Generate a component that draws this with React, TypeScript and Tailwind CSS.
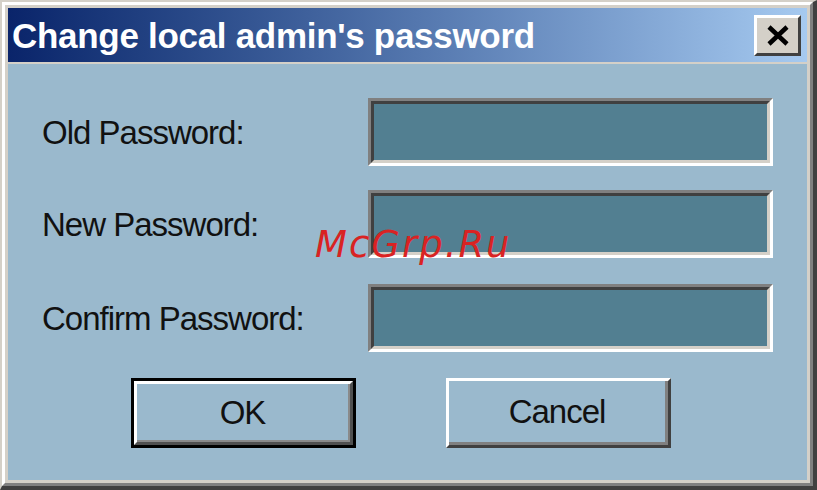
import React from "react";

function Field({ label }: { label: string }) {
  return (
    <div className="flex items-center h-[68px]">
      <div className="w-[326px] text-[33px] tracking-[-1px] text-[#111] leading-none" style={{}}>
        {label}
      </div>
      <div className="w-[405px] h-[68px] border-t-[3px] border-l-[3px] border-t-[#808080] border-l-[#808080] border-b-[3px] border-r-[3px] border-b-white border-r-white">
        <div className="w-full h-full border-t-[3px] border-l-[3px] border-t-[#404040] border-l-[#404040] border-b-[3px] border-r-[3px] border-b-[#d4d0c8] border-r-[#d4d0c8] bg-[#527f91]" />
      </div>
    </div>
  );
}

export default function App() {
  return (
    <div
      className="relative w-[817px] h-[490px] overflow-hidden"
      style={{ fontFamily: '"Liberation Sans", Arial, sans-serif' }}
    >
      <div className="w-full h-full border-t-2 border-l-2 border-t-[#d4d0c8] border-l-[#d4d0c8] border-b-4 border-r-4 border-b-[#404040] border-r-[#404040]">
        <div className="w-full h-full border-t-[3px] border-l-[3px] border-t-white border-l-white border-b-[3px] border-r-[3px] border-b-[#808080] border-r-[#808080]">
          <div className="w-full h-full border-[3px] border-[#d4d0c8] bg-[#d4d0c8] flex flex-col">
            <div className="h-[54px] shrink-0 flex items-center justify-between pl-[4px] pr-[6px] bg-gradient-to-r from-[#0a246a] to-[#a6caf0]">
              <span className="text-white font-bold text-[35px] leading-none tracking-[-0.3px]">
                Change local admin's password
              </span>
              <div className="w-[47px] h-[41px] border-t-[3px] border-l-[3px] border-t-white border-l-white border-b-[3px] border-r-[3px] border-b-[#404040] border-r-[#404040] bg-[#d4d0c8] flex items-center justify-center">
                <svg width="24" height="21" viewBox="0 0 24 21">
                  <path d="M3 2 L21 19 M21 2 L3 19" stroke="#000" strokeWidth="4.5" />
                </svg>
              </div>
            </div>
            <div className="mt-[2px] flex-1 bg-[#9ab9cd] pl-[34px] pt-[34px] flex flex-col">
              <div className="flex flex-col gap-[23px]">
                <Field label="Old Password:" />
                <div className="mt-[1px]">
                  <Field label="New Password:" />
                </div>
                <div className="mt-[3px]">
                  <Field label="Confirm Password:" />
                </div>
              </div>
              <div className="flex mt-[26px] pl-[89px] gap-[90px]">
                <div className="w-[225px] h-[70px] border-[3px] border-black">
                  <div className="w-full h-full border-t-[3px] border-l-[3px] border-t-white border-l-white border-b-[3px] border-r-[3px] border-b-[#505050] border-r-[#505050]">
                    <div className="w-full h-full border-b-[2px] border-r-[2px] border-b-[#8a8a8a] border-r-[#8a8a8a] flex items-center justify-center text-[33px] tracking-[-1px] text-[#111] leading-none">
                      OK
                    </div>
                  </div>
                </div>
                <div className="w-[225px] h-[70px] border-t-[3px] border-l-[3px] border-t-white border-l-white border-b-[3px] border-r-[3px] border-b-[#404040] border-r-[#404040]">
                  <div className="w-full h-full border-b-[3px] border-r-[3px] border-b-[#808080] border-r-[#808080] flex items-center justify-center text-[33px] tracking-[-1px] text-[#111] leading-none">
                    Cancel
                  </div>
                </div>
              </div>
            </div>
          </div>
        </div>
      </div>
      <div
        className="absolute left-[315px] top-[226px] text-[37px] italic tracking-[2px] text-[#d92323] leading-none"
        style={{ fontFamily: '"DejaVu Sans", sans-serif' }}
      >
        McGrp.Ru
      </div>
    </div>
  );
}
